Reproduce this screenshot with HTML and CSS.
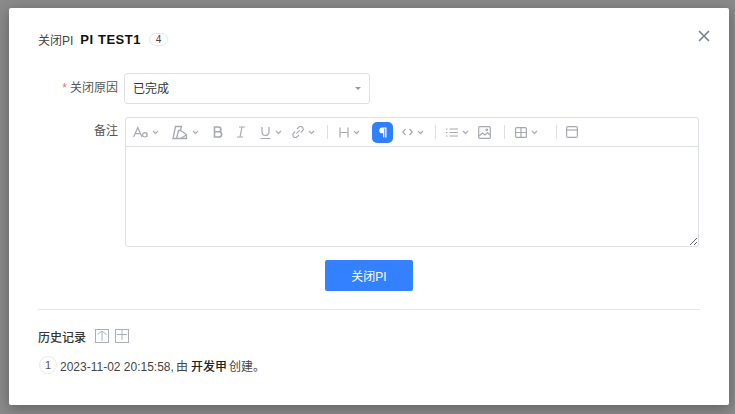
FILE: index.html
```html
<!DOCTYPE html>
<html lang="zh">
<head>
<meta charset="utf-8">
<title>关闭PI</title>
<link rel="stylesheet" href="styles.css">
</head>
<body>
<div class="dialog">
  <header class="head">
    <span class="head-label">关闭PI</span>
    <span class="head-name">PI TEST1</span>
    <span class="head-badge">4</span>
    <svg class="close" width="12" height="12" viewBox="0 0 12 12"><path d="M1 1l10 10M11 1L1 11" stroke="#77808f" stroke-width="1.6" fill="none"/></svg>
  </header>
  <div class="row row-select">
    <div class="label"><span class="req">*</span>关闭原因</div>
    <div class="select"><span class="select-value">已完成</span><i class="caret"></i></div>
  </div>
  <div class="row row-editor">
    <div class="label">备注</div>
    <div class="editor">
      <div class="toolbar">
        <span class="tool t-font"><svg width="15" height="12" viewBox="0 0 15 12" class="ic"><path d="M.6 11L4.800 1.500L9 11M2.200 7.700h5.200"/><path d="M14 6.500V11M14 8.800a2.200 2.200 0 1 1-4.400 0a2.200 2.200 0 1 1 4.400 0"/></svg><svg class="chev" width="7" height="5" viewBox="0 0 7 5"><path d="M1 1l2.500 2.500L6 1"/></svg></span>
        <span class="tool t-fill"><svg width="16" height="15" viewBox="0 0 16 15" class="ic ic-fill"><path d="M1 13.500L3.500 1.500H9.500L8.500 5.500L14.500 9.500V13.500Z"/><path d="M4.500 13.500L6.500 5.500H8.500"/><path d="M9 13.500l5-3.500"/></svg><svg class="chev" width="7" height="5" viewBox="0 0 7 5"><path d="M1 1l2.500 2.500L6 1"/></svg></span>
        <span class="tool t-b"><svg width="10" height="12" viewBox="0 0 10 12" class="ic ic-b"><path d="M1.500 1h4a2.300 2.300 0 0 1 0 4.800h-4zM1.500 5.800h4.500a2.600 2.600 0 0 1 0 5.200h-4.500z"/></svg></span>
        <span class="tool t-i"><svg width="10" height="12" viewBox="0 0 10 12" class="ic"><path d="M3 1h6M1 11h6M6 1L4 11"/></svg></span>
        <span class="tool t-u"><svg width="11" height="13" viewBox="0 0 11 13" class="ic"><path d="M2 1v5a3.500 3.500 0 0 0 7 0V1M.5 12.500h10"/></svg><svg class="chev" width="7" height="5" viewBox="0 0 7 5"><path d="M1 1l2.500 2.500L6 1"/></svg></span>
        <span class="tool t-link"><svg width="12" height="12" viewBox="0 0 12 12" class="ic"><path d="M5 3l1.700-1.700a2.500 2.500 0 0 1 3.800 3.500L8.800 6.500M7 9l-1.700 1.700a2.500 2.500 0 0 1-3.800-3.500L3.200 5.500M4.300 7.700l3.400-3.400"/></svg><svg class="chev" width="7" height="5" viewBox="0 0 7 5"><path d="M1 1l2.500 2.500L6 1"/></svg></span>
        <i class="sep sep-1"></i>
        <span class="tool t-h"><svg width="10" height="11" viewBox="0 0 10 11" class="ic"><path d="M1 .5v10M9 .5v10M1 5.500h8"/></svg><svg class="chev" width="7" height="5" viewBox="0 0 7 5"><path d="M1 1l2.500 2.500L6 1"/></svg></span>
        <span class="pilcrow"><svg width="8" height="11" viewBox="0 0 8 11"><path d="M7.500.500H3.200a2.700 2.700 0 0 0 0 5.800h.8v4.200h1.300V1.600h.9v8.900h1.300z" fill="#fff"/></svg></span>
        <span class="tool t-code"><svg width="11" height="8" viewBox="0 0 11 8" class="ic"><path d="M3.500 1L.8 4l2.700 3M7.500 1l2.700 3l-2.700 3"/></svg><svg class="chev" width="7" height="5" viewBox="0 0 7 5"><path d="M1 1l2.500 2.500L6 1"/></svg></span>
        <i class="sep sep-2"></i>
        <span class="tool t-list"><svg width="12" height="9" viewBox="0 0 12 9" class="ic"><path d="M3.500 1H12M3.500 4.500H12M3.500 8H12M0 1h1.500M0 4.500h1.500M0 8h1.500"/></svg><svg class="chev" width="7" height="5" viewBox="0 0 7 5"><path d="M1 1l2.500 2.500L6 1"/></svg></span>
        <span class="tool t-img"><svg width="13" height="13" viewBox="0 0 13 13" class="ic"><rect x=".7" y=".7" width="11.600" height="11.600" rx="1"/><path d="M1 10l3.500-3l2.500 2l2.500-2.500l2.500 2.500"/><circle cx="8.800" cy="3.800" r=".8"/></svg></span>
        <i class="sep sep-3"></i>
        <span class="tool t-table"><svg width="12" height="11" viewBox="0 0 12 11" class="ic"><rect x=".6" y=".6" width="10.800" height="9.800" rx="1"/><path d="M.6 5.500h10.800M6 .6v9.800"/></svg><svg class="chev" width="7" height="5" viewBox="0 0 7 5"><path d="M1 1l2.500 2.500L6 1"/></svg></span>
        <i class="sep sep-4"></i>
        <span class="tool t-box"><svg width="12" height="12" viewBox="0 0 12 12" class="ic"><rect x=".6" y=".6" width="10.800" height="10.800" rx="1.500"/><path d="M.6 4h10.800"/></svg></span>
      </div>
      <textarea class="area"></textarea>
    </div>
  </div>
  <div class="actions"><button class="submit">关闭PI</button></div>
  <hr class="rule">
  <div class="hist-head">
    <span class="hist-title">历史记录</span>
    <svg class="hist-ic" width="14" height="14" viewBox="0 0 14 14"><rect x=".5" y=".5" width="13" height="13"/><path d="M2.500 5.500L7 2l4.500 3.500M7 2v10"/></svg>
    <svg class="hist-ic" width="14" height="14" viewBox="0 0 14 14"><rect x=".5" y=".5" width="13" height="13"/><path d="M2 5.500h10M7 1v10"/></svg>
  </div>
  <div class="hist-row">
    <span class="hist-num">1</span>
    <span class="hist-text">2023-11-02 20:15:58,<span class="by">由</span><b class="who">开发甲</b>创建。</span>
  </div>
</div>
</body>
</html>
```
FILE: styles.css
```css
* { box-sizing: border-box; }
html, body { margin: 0; height: 100%; }
body {
  width: 735px;
  height: 414px;
  overflow: hidden;
  background: #8a8a8a;
  padding: 8px 6px 9px 9px;
  font-family: "Liberation Sans", "Noto Sans CJK SC", sans-serif;
  font-size: 12px;
  color: #333;
}
.dialog {
  height: 397px;
  background: #fff;
  padding: 21px 29px 0;
  box-shadow: 0 3px 14px rgba(0, 0, 0, .32);
  border-radius: 2px;
}
.head {
  position: relative;
  display: flex;
  align-items: center;
  height: 20px;
}
.head-label { color: #444; margin-right: 7px; }
.head-name { font-size: 13px; font-weight: 700; color: #111; letter-spacing: .55px; margin-right: 8px; }
.head-badge {
  width: 19px;
  height: 13px;
  border: 1px solid #e3e6ef;
  border-radius: 7px;
  font-size: 10px;
  line-height: 11px;
  text-align: center;
  color: #444;
}
.close { position: absolute; right: -10px; top: 1px; }
.row { display: flex; }
.label {
  text-align: right;
  color: #555;
  font-size: 12px;
  line-height: 30px;
}
.req { color: #f56c6c; margin-right: 3px; }
.row-select { margin-top: 24px; }
.row-select .label { width: 80px; margin-right: 6px; }
.select {
  width: 246px;
  height: 31px;
  border: 1px solid #dcdfe6;
  border-radius: 3px;
  display: flex;
  align-items: center;
  justify-content: space-between;
  padding: 0 8px;
  color: #333;
}
.select-value { position: relative; top: -1px; }
.caret {
  width: 0;
  height: 0;
  border: 3px solid transparent;
  border-top: 3px solid #999;
  margin-top: 3px;
}
.row-editor { margin-top: 13px; }
.row-editor .label { line-height: 28px; width: 80px; margin-right: 7px; }
.editor {
  width: 574px;
  height: 130px;
  border: 1px solid #dcdfe6;
  border-radius: 3px;
  display: flex;
  flex-direction: column;
}
.toolbar {
  height: 29px;
  flex: none;
  border-bottom: 1px solid #dcdfe6;
  display: flex;
  align-items: center;
  padding-left: 7px;
}
.tool { display: inline-flex; align-items: center; gap: 4px; flex: none; }
.ic { fill: none; stroke: #a6a9b0; stroke-width: 1.200; }
.ic-b { stroke-width: 1.600; }
.ic-fill { stroke-width: 1.300; }
.chev { fill: none; stroke: #a6a9b0; stroke-width: 1.100; }
.t-fill { margin-left: 13px; }
.t-b { margin-left: 14px; }
.t-i { margin-left: 13px; }
.t-u { margin-left: 14px; }
.t-link { margin-left: 10px; }
.sep { width: 1px; height: 14px; background: #dcdfe6; flex: none; }
.sep-1 { margin-left: 12px; }
.t-h { margin-left: 11px; }
.pilcrow {
  width: 21px;
  height: 21px;
  margin-left: 12px;
  background: #2f80ff;
  border-radius: 5px;
  display: flex;
  align-items: center;
  justify-content: center;
  flex: none;
}
.t-code { margin-left: 9px; }
.sep-2 { margin-left: 11px; }
.t-list { margin-left: 10px; }
.t-img { margin-left: 9px; }
.sep-3 { margin-left: 13px; }
.t-table { margin-left: 10px; }
.sep-4 { margin-left: 18px; }
.t-box { margin-left: 9px; }
.area {
  flex: 1;
  width: 100%;
  border: 0;
  background: transparent;
  outline: 0;
  display: block;
}
.actions { display: flex; justify-content: center; margin-top: 13px; }
.submit {
  width: 88px;
  height: 31px;
  border: 0;
  border-radius: 2px;
  background: #3381ff;
  color: #fff;
  font: 12px "Liberation Sans", "Noto Sans CJK SC", sans-serif;
  padding: 0;
}
.rule { margin: 18px 0 0; border: 0; border-top: 1px solid #e4e6ec; }
.hist-head { display: flex; align-items: center; margin-top: 19px; height: 14px; }
.hist-title { font-weight: 500; color: #333; margin-right: 9px; }
.hist-ic { fill: none; stroke: #a9aebc; stroke-width: 1; margin-right: 6px; }
.hist-row { display: flex; align-items: center; margin-top: 13px; margin-left: 1px; }
.hist-num {
  width: 18px;
  height: 18px;
  border: 1px solid #e8e8ee;
  border-radius: 50%;
  text-align: center;
  line-height: 16px;
  font-size: 11px;
  color: #555;
  margin-right: 3px;
}
.hist-text { color: #444; }
.by { margin: 0 2px 0 2px; }
.who { color: #222; font-weight: 500; margin-right: 2px; margin-left: 1px; }
```
